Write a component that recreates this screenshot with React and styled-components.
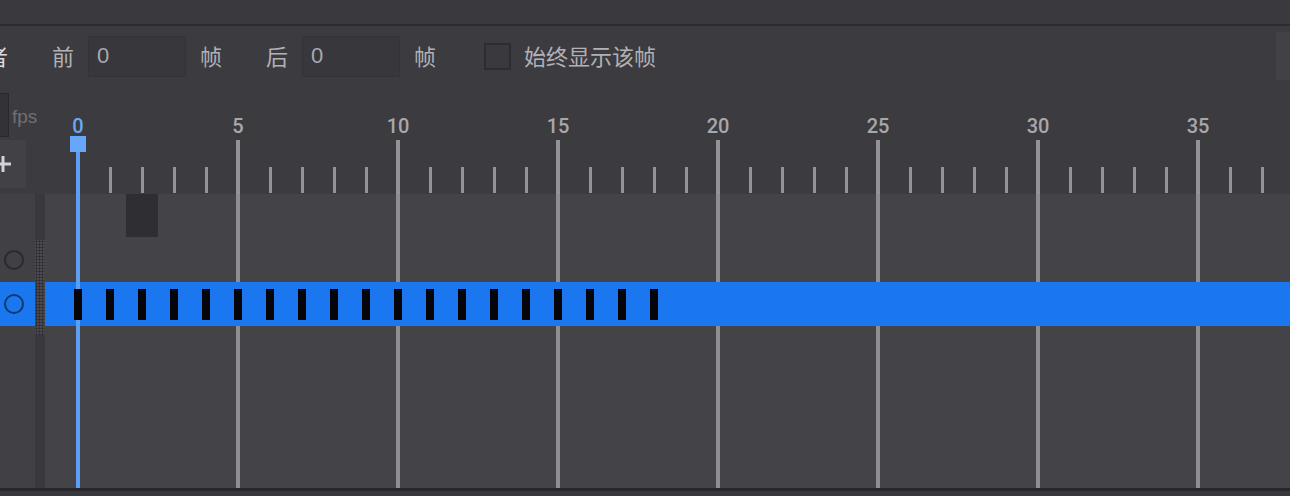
import React from 'react';
import styled, { createGlobalStyle } from 'styled-components';

const FRAME_COUNT = 40;
const KEYFRAME_COUNT = 19;

const GlobalStyle = createGlobalStyle`
  html, body {
    margin: 0;
    padding: 0;
    background: #3a393e;
  }
  body {
    font-family: "Liberation Sans", "Noto Sans CJK SC", sans-serif;
    overflow: hidden;
  }
`;

const Screen = styled.div`
  width: 1290px;
  height: 496px;
  display: flex;
  flex-direction: column;
  overflow: hidden;
  background: #3c3b40;
`;

const TopBar = styled.div`
  height: 24px;
  flex-shrink: 0;
  background: #3a393e;
  border-bottom: 2px solid #2c2b30;
`;

const Toolbar = styled.div`
  height: 64px;
  flex-shrink: 0;
  box-sizing: border-box;
  padding-bottom: 4px;
  display: flex;
  align-items: center;
  gap: 44px;
  background: #3c3b40;
  font-family: "Noto Sans CJK SC", sans-serif;
  font-size: 22px;
  color: #b2b1b6;
`;

const CutLabel = styled.span`
  margin-left: -14px;
  margin-top: -2px;
  color: #dcdbe0;
  line-height: 1;
`;

const Field = styled.div`
  display: flex;
  align-items: center;
  gap: 14px;
`;

const Text = styled.span`
  line-height: 1;
  margin-top: -2px;
`;

const NumberInput = styled.div`
  width: 98px;
  height: 41px;
  box-sizing: border-box;
  padding-left: 8px;
  display: flex;
  align-items: center;
  background: #38373c;
  border: 1px solid #343338;
  font-family: "Liberation Sans", sans-serif;
  font-size: 22px;
  color: #a9a8ad;
`;

const CheckRow = styled.label`
  display: flex;
  align-items: center;
  gap: 13px;
  margin-left: 4px;
`;

const CheckBox = styled.span`
  width: 27px;
  height: 27px;
  box-sizing: border-box;
  border: 2px solid #2d2c31;
  background: #3a393e;
`;

const SidePanel = styled.div`
  margin-left: auto;
  align-self: flex-start;
  margin-top: 6px;
  width: 14px;
  height: 48px;
  background: #424146;
`;

const Timeline = styled.div`
  flex: 1;
  display: flex;
  min-height: 0;
`;

const LeftPane = styled.div`
  width: 45px;
  flex-shrink: 0;
  display: flex;
  flex-direction: column;
  overflow: hidden;
`;

const RulerSide = styled.div`
  height: 104px;
  flex-shrink: 0;
  box-sizing: border-box;
  padding-top: 3px;
  display: flex;
  flex-direction: column;
  gap: 3px;
`;

const FpsRow = styled.div`
  height: 44px;
  display: flex;
  align-items: center;
  gap: 3px;
`;

const FpsInput = styled.div`
  width: 40px;
  height: 44px;
  margin-left: -31px;
  box-sizing: border-box;
  border: 1px solid #29282d;
  background: #333237;
  flex-shrink: 0;
`;

const FpsLabel = styled.span`
  font-size: 19px;
  color: #707075;
  line-height: 1;
  margin-top: 3px;
`;

const AddButton = styled.div`
  width: 46px;
  height: 48px;
  margin-left: -20px;
  background: #424146;
  position: relative;
  flex-shrink: 0;

  &::before,
  &::after {
    content: '';
    position: absolute;
    background: #d2d1d6;
    left: 50%;
    top: 50%;
    transform: translate(-50%, -50%);
  }
  &::before {
    width: 16px;
    height: 3px;
  }
  &::after {
    width: 3px;
    height: 16px;
  }
`;

const LayerArea = styled.div`
  flex: 1;
  display: flex;
`;

const LayerColumn = styled.div`
  width: 35px;
  background: #414045;
  display: flex;
  flex-direction: column;
`;

const LayerRow = styled.div`
  height: 44px;
  display: flex;
  align-items: center;
  background: ${p => (p.$selected ? '#1b77f0' : 'transparent')};
`;

const Dot = styled.span`
  width: 20px;
  height: 20px;
  margin-left: 4px;
  box-sizing: border-box;
  border-radius: 50%;
  border: 2px solid ${p => (p.$selected ? '#0e3a6c' : '#2a292e')};
`;

const Strip = styled.div`
  width: 10px;
  background: #39383d;
  display: flex;
  flex-direction: column;
`;

const Grip = styled.div`
  margin-top: 46px;
  height: 95px;
  background-color: #4a494e;
  background-image: radial-gradient(#2b2a2e 45%, transparent 50%);
  background-size: 3px 3px;
`;

const MainPane = styled.div`
  flex: 1;
  display: flex;
  flex-direction: column;
  position: relative;
  overflow: hidden;
`;

const Ruler = styled.div`
  height: 104px;
  flex-shrink: 0;
  display: flex;
  padding-left: 17px;
  background: #3c3b40;
`;

const FrameCell = styled.div`
  width: 32px;
  flex-shrink: 0;
  display: flex;
  flex-direction: column;
  align-items: center;
  justify-content: flex-end;
`;

const FrameLabel = styled.span`
  font-family: Roboto, "Liberation Sans", sans-serif;
  font-weight: 500;
  font-size: 20px;
  line-height: 20px;
  margin-bottom: 4px;
  color: ${p => (p.$active ? '#68a8fa' : '#a8a7ac')};
  white-space: nowrap;
`;

const Tick = styled.span`
  width: ${p => (p.$major ? 4 : 3)}px;
  height: ${p => (p.$major ? 54 : 26)}px;
  margin-bottom: ${p => (p.$major ? 0 : 1)}px;
  background: #939297;
`;

const Tracks = styled.div`
  flex: 1;
  background-color: #444348;
  background-image: repeating-linear-gradient(
    90deg,
    transparent 0 31px,
    #8e8d92 31px 35px,
    transparent 35px 160px
  );
  display: flex;
  flex-direction: column;
`;

const TrackRow = styled.div`
  height: 44px;
  flex-shrink: 0;
  display: flex;
  padding-left: 17px;
  background: ${p => (p.$selected ? '#1b77f0' : 'transparent')};
`;

const TrackCell = styled.div`
  width: 32px;
  flex-shrink: 0;
  display: flex;
  align-items: center;
  justify-content: center;
`;

const Keyframe = styled.span`
  position: relative;
  z-index: 2;
  width: 8px;
  height: 31px;
  background: #050507;
`;

const EmptyBlock = styled.span`
  width: 32px;
  height: 43px;
  align-self: flex-start;
  background: #2f2e32;
`;

const Playhead = styled.div`
  position: absolute;
  z-index: 1;
  left: 31px;
  top: 46px;
  bottom: 0;
  width: 4px;
  background: #5b9ff6;

  &::before {
    content: '';
    position: absolute;
    left: -6px;
    top: 0;
    width: 16px;
    height: 16px;
    background: #66a7fa;
  }
`;

const Footer = styled.div`
  height: 8px;
  flex-shrink: 0;
  box-sizing: border-box;
  border-top: 3px solid #27262a;
  background: #38373c;
`;

const frames = Array.from({ length: FRAME_COUNT }, (_, i) => i);

const rows = [
  { id: 'a', dot: false, selected: false, blocks: [2], keys: 0 },
  { id: 'b', dot: true, selected: false, blocks: [], keys: 0 },
  { id: 'c', dot: true, selected: true, blocks: [], keys: KEYFRAME_COUNT },
];

export default function App() {
  return (
    <Screen>
      <GlobalStyle />
      <TopBar />
      <Toolbar>
        <CutLabel>者</CutLabel>
        <Field>
          <Text>前</Text>
          <NumberInput>0</NumberInput>
          <Text>帧</Text>
        </Field>
        <Field>
          <Text>后</Text>
          <NumberInput>0</NumberInput>
          <Text>帧</Text>
        </Field>
        <CheckRow>
          <CheckBox />
          <Text>始终显示该帧</Text>
        </CheckRow>
        <SidePanel />
      </Toolbar>
      <Timeline>
        <LeftPane>
          <RulerSide>
            <FpsRow>
              <FpsInput />
              <FpsLabel>fps</FpsLabel>
            </FpsRow>
            <AddButton />
          </RulerSide>
          <LayerArea>
            <LayerColumn>
              {rows.map(r => (
                <LayerRow key={r.id} $selected={r.selected}>
                  {r.dot && <Dot $selected={r.selected} />}
                </LayerRow>
              ))}
            </LayerColumn>
            <Strip>
              <Grip />
            </Strip>
          </LayerArea>
        </LeftPane>
        <MainPane>
          <Ruler>
            {frames.map(f => (
              <FrameCell key={f}>
                {f % 5 === 0 && <FrameLabel $active={f === 0}>{f}</FrameLabel>}
                <Tick $major={f % 5 === 0} />
              </FrameCell>
            ))}
          </Ruler>
          <Tracks>
            {rows.map(r => (
              <TrackRow key={r.id} $selected={r.selected}>
                {frames.map(f => (
                  <TrackCell key={f}>
                    {r.blocks.includes(f) && <EmptyBlock />}
                    {f < r.keys && <Keyframe />}
                  </TrackCell>
                ))}
              </TrackRow>
            ))}
          </Tracks>
          <Playhead />
        </MainPane>
      </Timeline>
      <Footer />
    </Screen>
  );
}
